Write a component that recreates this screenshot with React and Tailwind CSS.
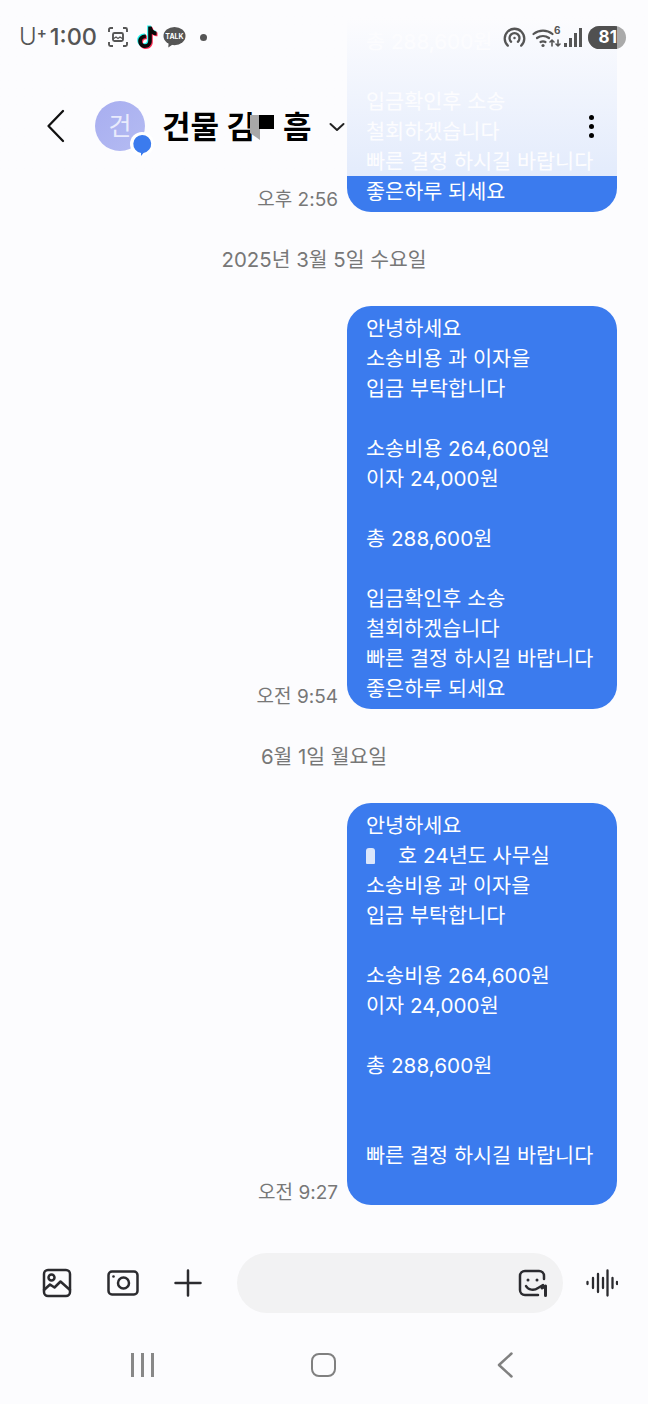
import React from 'react';

const FONT = 'font-["Inter","Noto_Sans_CJK_KR",sans-serif]';

function TiktokGlyph({ color, className = '' }) {
  return (
    <svg viewBox="0 0 24 24" className={`absolute inset-0 h-full w-full ${className}`} fill={color}>
      <path d="M13.2 1.5h3.6c.3 2.9 2 4.7 4.7 5v3.7c-1.8 0-3.4-.5-4.7-1.5v7.4c0 4.2-3.1 7-6.8 7-3.900 0-6.800-3.100-6.800-6.800 0-4 3.400-7.100 7.700-6.700v3.800c-2.200-.4-3.900 1-3.900 2.900 0 1.700 1.300 3 3 3 1.800 0 3.200-1.300 3.200-3.300z" />
    </svg>
  );
}

function Tiktok() {
  return (
    <div className="relative h-[26px] w-[24px]">
      <TiktokGlyph color="#25f4ee" className="-translate-x-[1px] -translate-y-[1px]" />
      <TiktokGlyph color="#fe2c55" className="translate-x-[1px] translate-y-[1px]" />
      <TiktokGlyph color="#0a0a0a" />
    </div>
  );
}

function StatusBar() {
  return (
    <div className="flex h-[74px] items-center pl-[19px] pr-[22px] text-[#555]">
      <span className="text-[24px] font-light leading-none">U</span>
      <span className="mb-[10px] text-[15px] font-semibold leading-none">+</span>
      <span className="ml-[3px] text-[23.500px] font-medium leading-none">1:00</span>
      {/* screenshot capture glyph */}
      <svg viewBox="0 0 24 24" className="ml-[9px] h-[24px] w-[24px]" fill="none" stroke="#555" strokeWidth="1.900">
        <path d="M3 7V4.500A1.500 1.500 0 0 1 4.500 3H7M17 3h2.500A1.500 1.500 0 0 1 21 4.500V7M21 17v2.500a1.500 1.500 0 0 1-1.500 1.500H17M7 21H4.500A1.500 1.500 0 0 1 3 19.500V17" />
        <rect x="7" y="8" width="10" height="8" rx="1.500" />
        <path d="M7 14l3-2 2 1.500 2-1.500 3 2" strokeWidth="1.300" />
      </svg>
      <div className="ml-[5px]">
        <Tiktok />
      </div>
      {/* kakao talk balloon */}
      <div className="relative ml-[4px] h-[23px] w-[23px]">
        <svg viewBox="0 0 24 24" className="absolute inset-0 h-full w-full" fill="#555">
          <ellipse cx="12" cy="10.500" rx="11.500" ry="9.500" />
          <path d="M6 16l-.5 6.500L12 18z" />
        </svg>
        <span className="absolute inset-x-0 top-[7px] text-center text-[7px] font-bold leading-[8px] text-white">TALK</span>
      </div>
      <div className="ml-[14px] h-[7px] w-[7px] rounded-full bg-[#555]" />

      <div className="ml-auto flex items-center">
        <svg viewBox="0 0 24 24" className="h-[23px] w-[23px]" fill="none" stroke="#555" strokeWidth="2.400" strokeLinecap="round">
          <path d="M5 20.500a10.200 10.200 0 1 1 14 0" />
          <path d="M8.500 16.500a5.200 5.200 0 1 1 7 0" />
          <circle cx="12" cy="12.500" r="1.300" fill="#555" stroke="none" />
        </svg>
        <svg viewBox="0 0 30 24" className="ml-[6px] h-[24px] w-[30px]" fill="none" stroke="#555" strokeLinecap="round">
          <path d="M1.500 9a15 15 0 0 1 19 0" strokeWidth="2.200" />
          <path d="M5 13a10 10 0 0 1 12 0" strokeWidth="2.200" />
          <path d="M8.500 17a5 5 0 0 1 5 0" strokeWidth="2.200" />
          <circle cx="11" cy="20.500" r="1.600" fill="#555" stroke="none" />
          <path d="M20 21v-6M20 15l-2 2M20 15l2 2M26 15v6M26 21l-2-2M26 21l2-2" strokeWidth="1.600" />
        </svg>
        <span className="-ml-[8px] -mt-[15px] w-[8px] text-[10px] font-bold leading-none">6</span>
        <div className="ml-[2px] flex h-[19px] items-end gap-[2px]">
          <div className="h-[4px] w-[3px] bg-[#555]" />
          <div className="h-[9px] w-[3px] bg-[#555]" />
          <div className="h-[14px] w-[3px] bg-[#555]" />
          <div className="h-[19px] w-[3px] bg-[#555]" />
        </div>
        <div className="ml-[6px] flex h-[23px] w-[38px] overflow-hidden rounded-full bg-[#aaa]">
          <div className="flex h-full w-[29px] items-center justify-end bg-[#505050]">
            <span className="text-[17px] font-bold leading-none text-white">81</span>
          </div>
        </div>
      </div>
    </div>
  );
}

function Header() {
  return (
    <div className="absolute inset-x-0 top-0 h-[176px] bg-gradient-to-b from-[#fcfcfe] from-10% to-[#fcfcfe]/87">
      <StatusBar />
      <div className="flex h-[104px] items-center pl-[46px] pr-[54px]">
        <svg viewBox="0 0 20 34" className="h-[34px] w-[20px]" fill="none" stroke="#111" strokeWidth="2.300" strokeLinecap="round" strokeLinejoin="round">
          <path d="M17 2L2.500 17 17 32" />
        </svg>
        <div className="relative ml-[29px] h-[50px] w-[50px] rounded-full bg-gradient-to-br from-[#a8aef0] to-[#b4bbf2]">
          <div className="flex h-full items-center justify-center text-[25px] leading-none text-[#e9ebfc]">건</div>
          {/* message-type badge */}
          <svg viewBox="0 0 24 26" className="absolute -bottom-[7px] -right-[9px] h-[26px] w-[24px]">
            <circle cx="12" cy="12" r="12" fill="#fff" />
            <path d="M12 3a9 9 0 0 1 1.500 17.900L11 24v-3.100A9 9 0 0 1 12 3z" fill="#3b7bee" />
          </svg>
        </div>
        <div className="ml-[17px] flex items-center text-[31px] font-bold leading-none text-black">
          <span>건물 김</span>
          {/* masked syllable in the contact name */}
          <span className="relative h-[30px] w-[28px]">
            <svg viewBox="0 0 10 25" className="absolute -left-[5px] top-[4px] h-[25px] w-[10px]" fill="#a8a8a8">
              <path d="M0 0h10v25L0 18z" />
            </svg>
            <span className="absolute left-[4px] top-[4px] h-[14px] w-[15px] bg-black" />
          </span>
          <span>흠</span>
        </div>
        <svg viewBox="0 0 16 10" className="ml-[18px] mt-[2px] h-[10px] w-[16px]" fill="none" stroke="#222" strokeWidth="2" strokeLinecap="round" strokeLinejoin="round">
          <path d="M1.500 2L8 8l6.500-6" />
        </svg>
        <div className="ml-auto flex flex-col gap-[4px]">
          <div className="h-[5px] w-[5px] rounded-full bg-black" />
          <div className="h-[5px] w-[5px] rounded-full bg-black" />
          <div className="h-[5px] w-[5px] rounded-full bg-black" />
        </div>
      </div>
    </div>
  );
}

function Bubble({ time, lines, tight = false }) {
  return (
    <div className="flex shrink-0 items-end justify-end pr-[31px]">
      <span className="-mb-[1px] mr-[9px] text-[19px] leading-[26px] text-[#777]">{time}</span>
      <div className={`w-[270px] rounded-[24px] bg-[#3b7bee] pl-[19px] pt-[8px] text-[20.700px] leading-[30px] tracking-[0.03px] text-white ${tight ? 'pb-[4px]' : 'pb-[5px]'}`}>
        {lines.map((line, i) => (
          <div key={i} className="h-[30px] whitespace-nowrap">{line}</div>
        ))}
      </div>
    </div>
  );
}

function DateLine({ children }) {
  return (
    <div className="flex h-[94px] shrink-0 items-center justify-center pt-[2px] text-[20.400px] text-[#777]">{children}</div>
  );
}

const FIRST = [
  '안녕하세요', '소송비용 과 이자을', '입금 부탁합니다', '',
  '소송비용 264,600원', '이자 24,000원', '', '총 288,600원', '',
  '입금확인후 소송', '철회하겠습니다', '빠른 결정 하시길 바랍니다', '좋은하루 되세요',
];

const unitLine = (
  <span className="flex items-center">
    <span className="mr-[23px] h-[16px] w-[9px] rounded-t-[3px] rounded-b-[1px] bg-[#dbe6fb]" />
    호 24년도 사무실
  </span>
);

const LAST = [
  '안녕하세요', unitLine, '소송비용 과 이자을', '입금 부탁합니다', '',
  '소송비용 264,600원', '이자 24,000원', '', '총 288,600원', '', '',
  '빠른 결정 하시길 바랍니다', '',
];

function Composer() {
  return (
    <div className="flex h-[60px] shrink-0 items-center pl-[42px] pr-[29px]">
      <svg viewBox="0 0 30 30" className="h-[30px] w-[30px]" fill="none" stroke="#2b2b2f" strokeWidth="2.500" strokeLinejoin="round" strokeLinecap="round">
        <rect x="2" y="2" width="26" height="26" rx="4" />
        <circle cx="9.500" cy="9.500" r="3" />
        <path d="M2 22l6-5.500 4.500 3 6-6 9.500 8.500" />
      </svg>
      <svg viewBox="0 0 32 26" className="ml-[35px] h-[26px] w-[32px]" fill="none" stroke="#2b2b2f" strokeWidth="2.500">
        <rect x="1.500" y="1.500" width="29" height="23" rx="3.500" />
        <circle cx="16.500" cy="13" r="5.500" />
        <circle cx="6.500" cy="6.500" r="1.300" fill="#2b2b2f" stroke="none" />
      </svg>
      <svg viewBox="0 0 28 28" className="ml-[35px] h-[28px] w-[28px]" fill="none" stroke="#2b2b2f" strokeWidth="2.500" strokeLinecap="round">
        <path d="M14 1.500v25M1.500 14h25" />
      </svg>
      <div className="ml-[35px] flex h-[60px] w-[326px] items-center justify-end rounded-full bg-[#f2f2f3] pr-[15px]">
        <svg viewBox="0 0 30 28" className="h-[28px] w-[30px]" fill="none" stroke="#2b2b2f" strokeWidth="2.500" strokeLinecap="round" strokeLinejoin="round">
          <path d="M26 10V7a5 5 0 0 0-5-5H7a5 5 0 0 0-5 5v14a5 5 0 0 0 5 5h13" />
          <circle cx="10" cy="11" r="1.500" fill="#2b2b2f" stroke="none" />
          <circle cx="19" cy="11" r="1.500" fill="#2b2b2f" stroke="none" />
          <path d="M8 17c2 4 8 5 12 2l5-3" />
          <path d="M24 19l3.500-2v9.500" strokeWidth="3" />
        </svg>
      </div>
      <svg viewBox="0 0 32 28" className="ml-[23px] h-[28px] w-[32px]" fill="none" stroke="#2b2b2f" strokeWidth="2.300" strokeLinecap="round">
        <path d="M1.500 13v2M7 9v10M12 5v18M17 9v10M21.500 1.500v25M26.500 9v10M31 13v2" />
      </svg>
    </div>
  );
}

function NavBar() {
  return (
    <div className="flex flex-1 items-start justify-between pl-[131px] pr-[135px] pt-[40px]">
      <div className="flex h-[24px] w-[23px] justify-between">
        <div className="w-[3px] bg-[#888]" />
        <div className="w-[3px] bg-[#888]" />
        <div className="w-[3px] bg-[#888]" />
      </div>
      <div className="mr-[4px] h-[24px] w-[25px] rounded-[8px] border-[2.500px] border-[#808080]" />
      <svg viewBox="0 0 16 26" className="-mt-[1px] h-[26px] w-[16px]" fill="none" stroke="#808080" strokeWidth="2.500" strokeLinecap="round" strokeLinejoin="round">
        <path d="M14.500 1.500L2 13l12.500 11.500" />
      </svg>
    </div>
  );
}

export default function App() {
  return (
    <div className={`relative flex h-[1404px] w-[648px] flex-col overflow-hidden bg-[#fcfcfe] ${FONT}`}>
      <div className="flex h-[1253px] shrink-0 flex-col justify-end overflow-hidden pb-[48px]">
        <Bubble time="오후 2:56" lines={FIRST} />
        <DateLine>2025년 3월 5일 수요일</DateLine>
        <Bubble time="오전 9:54" lines={FIRST} />
        <DateLine>6월 1일 월요일</DateLine>
        <Bubble time="오전 9:27" lines={LAST} tight />
      </div>
      <Composer />
      <NavBar />
      <Header />
    </div>
  );
}
